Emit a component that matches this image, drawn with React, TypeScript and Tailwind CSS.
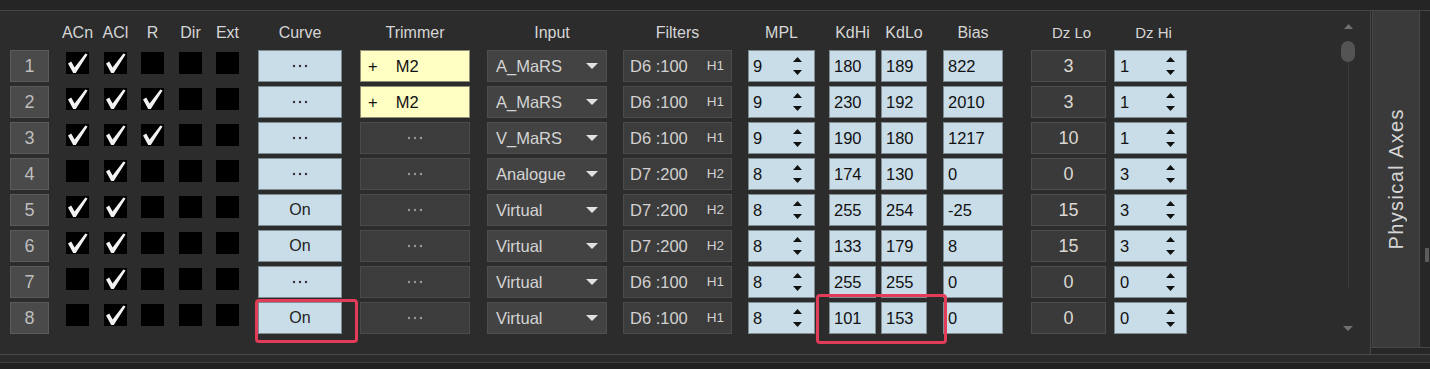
import React from "react";

type Row = {
  n: number;
  cb: boolean[];
  curve: "dots" | "On";
  trim: boolean;
  input: string;
  filt: string;
  h: string;
  mpl: string;
  kdhi: string;
  kdlo: string;
  bias: string;
  dzlo: string;
  dzhi: string;
};

const rows: Row[] = [
  { n: 1, cb: [true, true, false, false, false], curve: "dots", trim: true, input: "A_MaRS", filt: "D6 :100", h: "H1", mpl: "9", kdhi: "180", kdlo: "189", bias: "822", dzlo: "3", dzhi: "1" },
  { n: 2, cb: [true, true, true, false, false], curve: "dots", trim: true, input: "A_MaRS", filt: "D6 :100", h: "H1", mpl: "9", kdhi: "230", kdlo: "192", bias: "2010", dzlo: "3", dzhi: "1" },
  { n: 3, cb: [true, true, true, false, false], curve: "dots", trim: false, input: "V_MaRS", filt: "D6 :100", h: "H1", mpl: "9", kdhi: "190", kdlo: "180", bias: "1217", dzlo: "10", dzhi: "1" },
  { n: 4, cb: [false, true, false, false, false], curve: "dots", trim: false, input: "Analogue", filt: "D7 :200", h: "H2", mpl: "8", kdhi: "174", kdlo: "130", bias: "0", dzlo: "0", dzhi: "3" },
  { n: 5, cb: [true, true, false, false, false], curve: "On", trim: false, input: "Virtual", filt: "D7 :200", h: "H2", mpl: "8", kdhi: "255", kdlo: "254", bias: "-25", dzlo: "15", dzhi: "3" },
  { n: 6, cb: [true, true, false, false, false], curve: "On", trim: false, input: "Virtual", filt: "D7 :200", h: "H2", mpl: "8", kdhi: "133", kdlo: "179", bias: "8", dzlo: "15", dzhi: "3" },
  { n: 7, cb: [false, true, false, false, false], curve: "dots", trim: false, input: "Virtual", filt: "D6 :100", h: "H1", mpl: "8", kdhi: "255", kdlo: "255", bias: "0", dzlo: "0", dzhi: "0" },
  { n: 8, cb: [false, true, false, false, false], curve: "On", trim: false, input: "Virtual", filt: "D6 :100", h: "H1", mpl: "8", kdhi: "101", kdlo: "153", bias: "0", dzlo: "0", dzhi: "0" },
];

const COL = {
  num: "ml-[10px] w-[39px]",
  cb: [
    "ml-[17px] w-[23px]",
    "ml-[15px] w-[23px]",
    "ml-[14px] w-[23px]",
    "ml-[15px] w-[23px]",
    "ml-[14px] w-[23px]",
  ],
  curve: "ml-[19px] w-[84px]",
  trim: "ml-[18px] w-[110px]",
  input: "ml-[17px] w-[120px]",
  filt: "ml-[16px] w-[109px]",
  mpl: "ml-[16px] w-[67px]",
  kdhi: "ml-[14px] w-[47px]",
  kdlo: "ml-[5px] w-[46px]",
  bias: "ml-[16px] w-[60px]",
  dzlo: "ml-[28px] w-[75px]",
  dzhi: "ml-[8px] w-[73px]",
};

const LIGHT = "h-[32px] bg-[#c9dde9] border border-[#7f8d95] text-[#111] text-[16.5px]";
const DARK = "h-[32px] bg-[#3c3c3c] border border-[#4b4b4b] text-[#d2d2d2] text-[16.5px]";

function Check() {
  return (
    <svg width="23" height="22" viewBox="0 0 23 22">
      <polygon points="2,11.5 5.2,9.6 8.6,15.6 19.4,1.4 21.6,2.6 9.8,21 7.2,21" fill="#f2f2f2" />
    </svg>
  );
}

function Spinner() {
  return (
    <svg width="9" height="18" viewBox="0 0 9 18">
      <polygon points="0,5 4.5,0 9,5" fill="#111" />
      <polygon points="0,13 9,13 4.5,18" fill="#111" />
    </svg>
  );
}

function Dots({ color }: { color: string }) {
  return (
    <svg width="16" height="4" viewBox="0 0 16 4">
      <circle cx="2" cy="2" r="1.2" fill={color} />
      <circle cx="8" cy="2" r="1.2" fill={color} />
      <circle cx="14" cy="2" r="1.2" fill={color} />
    </svg>
  );
}

function Header() {
  const H = "flex justify-center whitespace-nowrap";
  return (
    <div className="flex h-[22px] items-center text-[16px] text-[#d6d6d6]">
      <div className={COL.num} />
      {["ACn", "ACl", "R", "Dir", "Ext"].map((t, i) => (
        <div key={t} className={`${COL.cb[i]} ${H}`}>{t}</div>
      ))}
      <div className={`${COL.curve} ${H}`}>Curve</div>
      <div className={`${COL.trim} ${H}`}>Trimmer</div>
      <div className={`${COL.input} ${H} pl-[10px]`}>Input</div>
      <div className={`${COL.filt} ${H}`}>Filters</div>
      <div className={`${COL.mpl} ${H}`}>MPL</div>
      <div className={`${COL.kdhi} ${H}`}>KdHi</div>
      <div className={`${COL.kdlo} ${H}`}>KdLo</div>
      <div className={`${COL.bias} ${H}`}>Bias</div>
      <div className={`${COL.dzlo} ${H} text-[15px] pl-[6px]`}>Dz Lo</div>
      <div className={`${COL.dzhi} ${H} text-[15px] pl-[6px]`}>Dz Hi</div>
    </div>
  );
}

function RowView({ r }: { r: Row }) {
  const last = r.n === 8;
  return (
    <div className="flex h-[32px] items-center">
      <div className={`${COL.num} h-[32px] bg-[#4a4a4a] border border-[#5b5b5b] flex items-center justify-center text-[18px] text-[#bdbdbd] font-light`}>
        {r.n}
      </div>
      {r.cb.map((c, i) => (
        <div key={i} className={`${COL.cb[i]} h-[22px] self-start mt-[2px] bg-black flex items-center justify-center`}>
          {c ? <Check /> : null}
        </div>
      ))}
      <div className={`${COL.curve} ${LIGHT} relative flex items-center justify-center`}>
        {r.curve === "On" ? <span className="text-[16px] text-[#222]">On</span> : <Dots color="#333" />}
        {last ? (
          <div className="absolute left-[-4px] top-[-4px] w-[103px] h-[44px] border-[3px] border-[#e23c58] rounded-[4px]" />
        ) : null}
      </div>
      {r.trim ? (
        <div className={`${COL.trim} h-[32px] bg-[#ffffc4] border border-[#8f8f76] flex items-center text-[16.5px] text-[#111]`}>
          <span className="ml-[7px]">+</span>
          <span className="ml-[18px]">M2</span>
        </div>
      ) : (
        <div className={`${COL.trim} ${DARK} flex items-center justify-center`}>
          <Dots color="#9a9a9a" />
        </div>
      )}
      <div className={`${COL.input} h-[32px] bg-[#434343] border border-[#4e4e4e] flex items-center justify-between pl-[8px] pr-[8px] text-[16.5px] text-[#d4d4d4]`}>
        <span>{r.input}</span>
        <svg width="12" height="6" viewBox="0 0 12 6">
          <polygon points="0,0 12,0 6,6" fill="#e2e2e2" />
        </svg>
      </div>
      <div className={`${COL.filt} ${DARK} flex items-center justify-between pl-[6px] pr-[7px]`}>
        <span>{r.filt}</span>
        <span className="text-[13.5px]">{r.h}</span>
      </div>
      <div className={`${COL.mpl} ${LIGHT} flex items-center justify-between pl-[4px] pr-[12px]`}>
        <span>{r.mpl}</span>
        <Spinner />
      </div>
      <div className={`${COL.kdhi} ${LIGHT} relative flex items-center pl-[4px]`}>
        <span>{r.kdhi}</span>
        {last ? (
          <div className="absolute left-[-14px] top-[-9px] w-[131px] h-[50px] border-[3px] border-[#e23c58] rounded-[4px]" />
        ) : null}
      </div>
      <div className={`${COL.kdlo} ${LIGHT} flex items-center pl-[4px]`}>
        <span>{r.kdlo}</span>
      </div>
      <div className={`${COL.bias} ${LIGHT} flex items-center pl-[4px]`}>
        <span>{r.bias}</span>
      </div>
      <div className={`${COL.dzlo} h-[32px] bg-[#3a3a3a] border border-[#4e4e4e] flex items-center justify-center text-[18px] text-[#dcd8d2]`}>
        {r.dzlo}
      </div>
      <div className={`${COL.dzhi} ${LIGHT} flex items-center justify-between pl-[5px] pr-[11px]`}>
        <span>{r.dzhi}</span>
        <Spinner />
      </div>
    </div>
  );
}

export default function App() {
  return (
    <div className="w-[1430px] h-[369px] overflow-hidden bg-[#2b2b2b] flex flex-col font-['Liberation_Sans',Arial,sans-serif]">
      <div className="h-[10px] bg-[#252525]" />
      <div className="flex h-[345px] border-y border-[#474747]">
        <div className="w-[1371px] h-full border-r border-[#474747] bg-[#2c2c2c] flex">
          <div className="flex-1 pt-[11px]">
            <Header />
            <div className="mt-[6px] flex flex-col gap-[4px]">
              {rows.map((r) => (
                <RowView key={r.n} r={r} />
              ))}
            </div>
          </div>
          <div className="w-[16px] mr-[14px] flex flex-col items-center">
            <svg className="mt-[13px]" width="9" height="5" viewBox="0 0 9 5">
              <polygon points="0,5 4.5,0 9,5" fill="#707070" />
            </svg>
            <div className="mt-[12px] w-[14px] h-[21px] rounded-full bg-[#545454]" />
            <div className="w-[1px] h-[226px] bg-[#3a3a3a]" />
            <svg className="mt-[38px]" width="10" height="5" viewBox="0 0 10 5">
              <polygon points="0,0 10,0 5,5" fill="#707070" />
            </svg>
          </div>
        </div>
        <div className="flex-1 flex flex-col bg-[#272727]">
          <div className="flex h-[337px] border-b border-[#474747]">
            <div className="ml-[1px] w-[48px] h-full bg-[#3a3a3a] border-x border-[#484848] flex items-center justify-center">
              <span className="[writing-mode:vertical-rl] rotate-180 text-[20px] tracking-[1.4px] text-[#d6d6d6] whitespace-nowrap">
                Physical Axes
              </span>
            </div>
            <div className="flex-1">
              <div className="ml-[5px] mt-[237px] w-[4px] h-[14px] bg-[#5c5c5c]" />
            </div>
          </div>
        </div>
      </div>
      <div className="h-[7px] bg-[#2b2b2b]" />
      <div className="h-[1px] bg-[#3e3e3e]" />
      <div className="flex-1 bg-[#212121]" />
    </div>
  );
}
